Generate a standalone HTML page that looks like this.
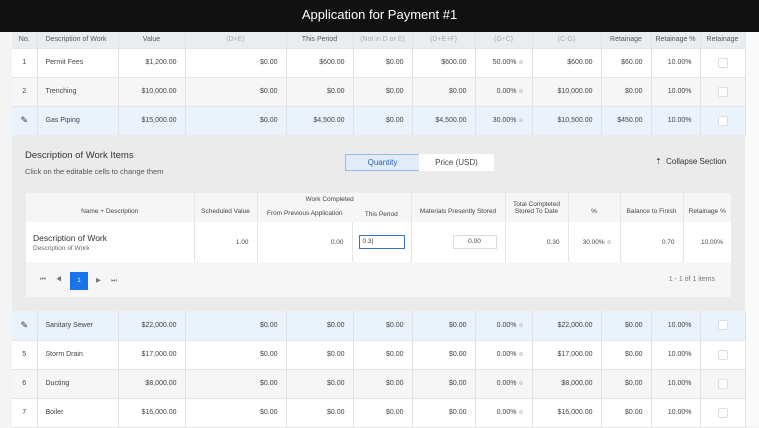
<!DOCTYPE html>
<html><head><meta charset="utf-8"><style>
*{margin:0;padding:0;box-sizing:border-box}
body{width:759px;height:426px;overflow:hidden;background:#f4f4f4;font-family:"Liberation Sans",sans-serif;color:#444;position:relative}
.hdr{position:absolute;left:0;top:0;width:759px;height:32px;background:#111;color:#fff;font-size:13px;text-align:center;line-height:29px}
.right{position:absolute;left:745px;top:32px;width:14px;height:394px;background:#fafafa}
table{border-collapse:collapse;table-layout:fixed;position:absolute}
.main{left:12px;width:733px;font-size:7px}
.main td{border-right:1px solid #e2e2e2;text-align:right;padding-right:8px;white-space:nowrap;overflow:hidden}
.main td:nth-child(1){text-align:center;padding:0}
.main td:nth-child(2){text-align:left;padding-left:8px}
.main td:last-child{text-align:center;padding:0}
.main tr{height:29px;background:#fff;border-bottom:1px solid #e6e6e6}
.main tr.b{background:#eaf2fc}
.main tr.g{background:#f6f6f6}
.main tr.h{height:16px;background:#eaedf0;color:#555}
.main tr.h td{text-align:center;padding:0}
.lt{color:#aaa}
.cb{display:inline-block;width:10px;height:10px;border:1px solid #ddd;border-radius:2px;background:#fff;vertical-align:middle}
.m{color:#bbb;font-size:6px}
.sec{position:absolute;left:12px;top:135px;width:733px;height:176px;background:#ebebeb}
.in{left:26px;top:193px;width:705px;font-size:6.5px}
.in td{border-right:1px solid #e6e6e6;text-align:right;padding-right:8px;white-space:nowrap}
.pen{font-size:9px;color:#335}
</style></head><body>
<div class="hdr">Application for Payment #1</div>
<div class="right"></div>
<table class="main" style="top:32px">
<colgroup><col style="width:25px"><col style="width:81px"><col style="width:67px"><col style="width:101px"><col style="width:67px"><col style="width:59px"><col style="width:63px"><col style="width:57px"><col style="width:69px"><col style="width:50px"><col style="width:49px"><col style="width:45px"></colgroup>
<tr class="h"><td>No.</td><td style="text-align:left;padding-left:8px">Description of Work</td><td>Value</td><td class="lt">(D+E)</td><td>This Period</td><td class="lt">(Not in D or E)</td><td class="lt">(D+E+F)</td><td class="lt">(G÷C)</td><td class="lt">(C-G)</td><td>Retainage</td><td>Retainage %</td><td>Retainage</td></tr>
<tr><td>1</td><td>Permit Fees</td><td>$1,200.00</td><td>$0.00</td><td>$600.00</td><td>$0.00</td><td>$600.00</td><td>50.00% <span class="m">⊕</span></td><td>$600.00</td><td>$60.00</td><td>10.00%</td><td><span class="cb"></span></td></tr>
<tr class="g"><td>2</td><td>Trenching</td><td>$10,000.00</td><td>$0.00</td><td>$0.00</td><td>$0.00</td><td>$0.00</td><td>0.00% <span class="m">⊕</span></td><td>$10,000.00</td><td>$0.00</td><td>10.00%</td><td><span class="cb"></span></td></tr>
<tr class="b"><td class="pen">✎</td><td>Gas Piping</td><td>$15,000.00</td><td>$0.00</td><td>$4,500.00</td><td>$0.00</td><td>$4,500.00</td><td>30.00% <span class="m">⊕</span></td><td>$10,500.00</td><td>$450.00</td><td>10.00%</td><td><span class="cb"></span></td></tr>
</table>
<div class="sec">
<div style="position:absolute;left:13px;top:15px;font-size:9.5px;color:#333">Description of Work Items</div>
<div style="position:absolute;left:13px;top:32px;font-size:7.5px;color:#555">Click on the editable cells to change them</div>
<div style="position:absolute;left:333px;top:19px;width:75px;height:17px;border:1px solid #9bbbe0;background:#e1ecf8;color:#2a66b5;font-size:8px;text-align:center;line-height:15px">Quantity</div>
<div style="position:absolute;left:407px;top:19px;width:75px;height:17px;background:#fff;color:#444;font-size:8px;text-align:center;line-height:17px">Price (USD)</div>
<div style="position:absolute;left:643px;top:22px;font-size:8px;color:#333">⇡&nbsp; Collapse Section</div>
</div>
<div style="position:absolute;left:257px;top:193px;width:154px;height:13px;background:#dcdcdc"></div>
<table class="in" style="top:193px;background:#f6f6f6">
<colgroup><col style="width:168px"><col style="width:63px"><col style="width:95px"><col style="width:59px"><col style="width:94px"><col style="width:63px"><col style="width:52px"><col style="width:63px"><col style="width:48px"></colgroup>
<tr style="height:29px;background:transparent"><td style="text-align:center;padding:8px 0 0">Name + Description</td><td style="padding:8px 0 0;text-align:center">Scheduled Value</td><td style="padding:0;text-align:center;border-right:0;vertical-align:top;line-height:14px;position:relative"><span style="position:absolute;left:48px;top:0">Work Completed</span><br>From Previous Application</td><td style="padding:13px 0 0;text-align:center">This Period</td><td style="padding:8px 0 0;text-align:center">Materials Presently Stored</td><td style="text-align:center;padding:0">Total Completed<br>Stored To Date</td><td style="text-align:center;padding:8px 0 0">%</td><td style="text-align:center;padding:8px 0 0">Balance to Finish</td><td style="text-align:center;padding:8px 0 0;border:0">Retainage %</td></tr>
<tr style="height:40px;background:#fff"><td style="text-align:left;padding-left:7px"><div style="font-size:8.5px;color:#333">Description of Work</div><div style="font-size:6.5px;color:#666;margin-top:2px">Description of Work</div></td><td>1.00</td><td>0.00</td><td style="padding:0 6px"><div style="border:1.5px solid #3b73c4;height:14px;width:46px;background:#fff;text-align:left;padding-left:3px;line-height:11px">0.3|</div></td><td><div style="display:inline-block;border:1px solid #ddd;width:44px;height:14px;text-align:center;line-height:12px">0.00</div></td><td>0.30</td><td>30.00% <span class="m">⊕</span></td><td>0.70</td><td style="border:0">10.00%</td></tr>
<tr style="height:35px"><td colspan="9" style="border:0;position:relative;text-align:left;padding:0"><span style="position:absolute;left:14px;top:14px;color:#777;letter-spacing:10px">⏮◀</span><span style="position:absolute;left:44px;top:10px;width:18px;height:18px;background:#1a73e8;color:#fff;text-align:center;line-height:18px">1</span><span style="position:absolute;left:70px;top:14px;color:#777;letter-spacing:10px">▶⏭</span><span style="position:absolute;right:16px;top:14px;color:#777;font-size:7px">1 - 1 of 1 items</span></td></tr>
</table>
<table class="main" style="top:311px">
<colgroup><col style="width:25px"><col style="width:81px"><col style="width:67px"><col style="width:101px"><col style="width:67px"><col style="width:59px"><col style="width:63px"><col style="width:57px"><col style="width:69px"><col style="width:50px"><col style="width:49px"><col style="width:45px"></colgroup>
<tr class="b"><td class="pen">✎</td><td>Sanitary Sewer</td><td>$22,000.00</td><td>$0.00</td><td>$0.00</td><td>$0.00</td><td>$0.00</td><td>0.00% <span class="m">⊕</span></td><td>$22,000.00</td><td>$0.00</td><td>10.00%</td><td><span class="cb"></span></td></tr>
<tr><td>5</td><td>Storm Drain</td><td>$17,000.00</td><td>$0.00</td><td>$0.00</td><td>$0.00</td><td>$0.00</td><td>0.00% <span class="m">⊕</span></td><td>$17,000.00</td><td>$0.00</td><td>10.00%</td><td><span class="cb"></span></td></tr>
<tr class="g"><td>6</td><td>Ducting</td><td>$8,000.00</td><td>$0.00</td><td>$0.00</td><td>$0.00</td><td>$0.00</td><td>0.00% <span class="m">⊕</span></td><td>$8,000.00</td><td>$0.00</td><td>10.00%</td><td><span class="cb"></span></td></tr>
<tr><td>7</td><td>Boiler</td><td>$16,000.00</td><td>$0.00</td><td>$0.00</td><td>$0.00</td><td>$0.00</td><td>0.00% <span class="m">⊕</span></td><td>$16,000.00</td><td>$0.00</td><td>10.00%</td><td><span class="cb"></span></td></tr>
</table>
</body></html>
